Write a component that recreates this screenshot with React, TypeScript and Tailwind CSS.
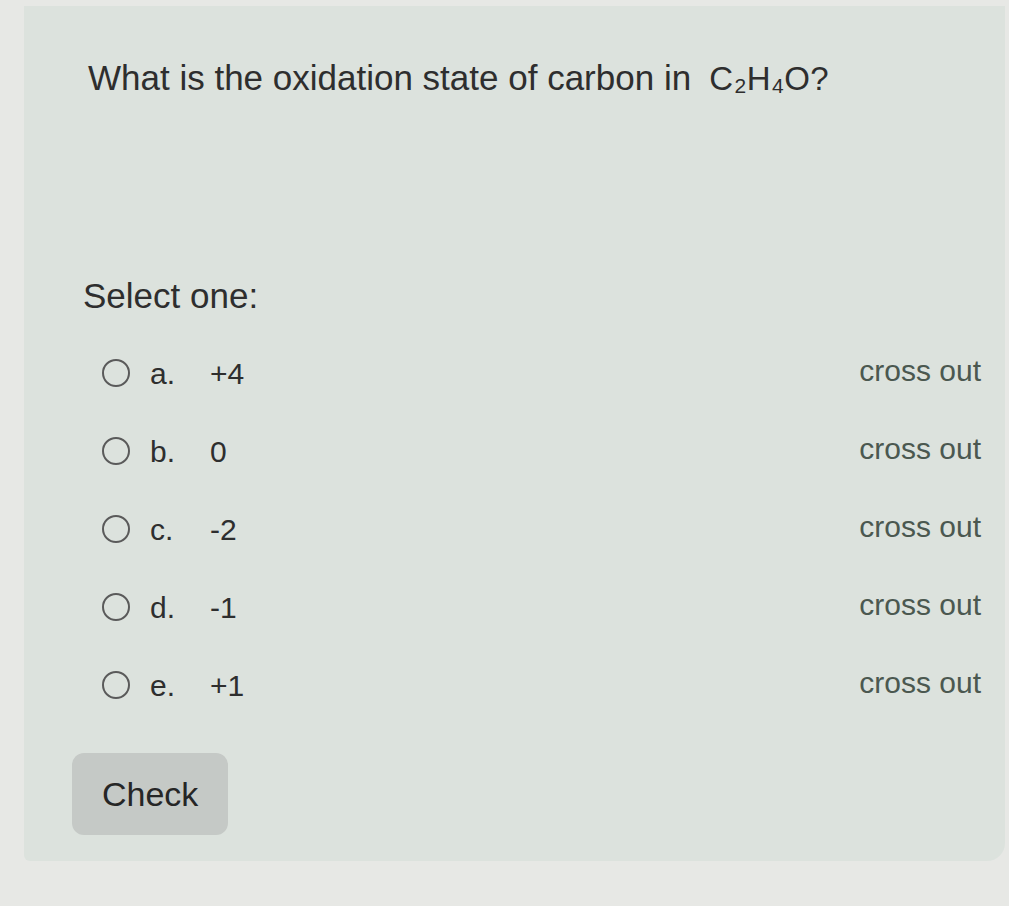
import React from "react";

const options = [
  { letter: "a.", value: "+4" },
  { letter: "b.", value: "0" },
  { letter: "c.", value: "-2" },
  { letter: "d.", value: "-1" },
  { letter: "e.", value: "+1" },
];

export default function App(): JSX.Element {
  return (
    <div
      className="w-[1009px] h-[906px] bg-[#e7e8e5] pt-[6px] pl-[24px] pr-[4px] overflow-hidden"
      style={{ fontFamily: '"Liberation Sans", Arial, sans-serif' }}
    >
      <div className="bg-[#dce2dd] rounded-br-[18px] rounded-bl-[6px] pt-[54px] pl-[64px] pr-[24px] pb-[26px] text-[#2e2e2e]">
        <h1 className="text-[35px] leading-[36px] whitespace-nowrap">
          What is the oxidation state of carbon in
          <span className="ml-[18px] text-[33px] tracking-[0.5px]">
            C<sub className="text-[21px] relative top-[3px] ml-[1px]">2</sub>H
            <sub className="text-[21px] relative top-[3px] ml-[1px]">4</sub>O?
          </span>
        </h1>

        <p className="mt-[181px] -ml-[5px] text-[35px] leading-[36px]">Select one:</p>

        <div className="mt-[20px] flex flex-col">
          {options.map((o) => (
            <div key={o.letter} className="h-[78px] flex items-center justify-between">
              <label className="flex items-center ml-[14px]">
                <span className="w-[28px] h-[28px] rounded-full border-2 border-[#5a5a5a] inline-block" />
                <span className="ml-[20px] text-[30px] w-[60px]">{o.letter}</span>
                <span className="text-[30px]">{o.value}</span>
              </label>
              <span className="text-[30px] text-[#4b5850] -mt-[6px]">cross out</span>
            </div>
          ))}
        </div>

        <button className="mt-[29px] -ml-[16px] w-[156px] h-[82px] rounded-[12px] bg-[#c5c9c6] text-[34px] text-[#262626] text-left pl-[30px]">
          Check
        </button>
      </div>
    </div>
  );
}
